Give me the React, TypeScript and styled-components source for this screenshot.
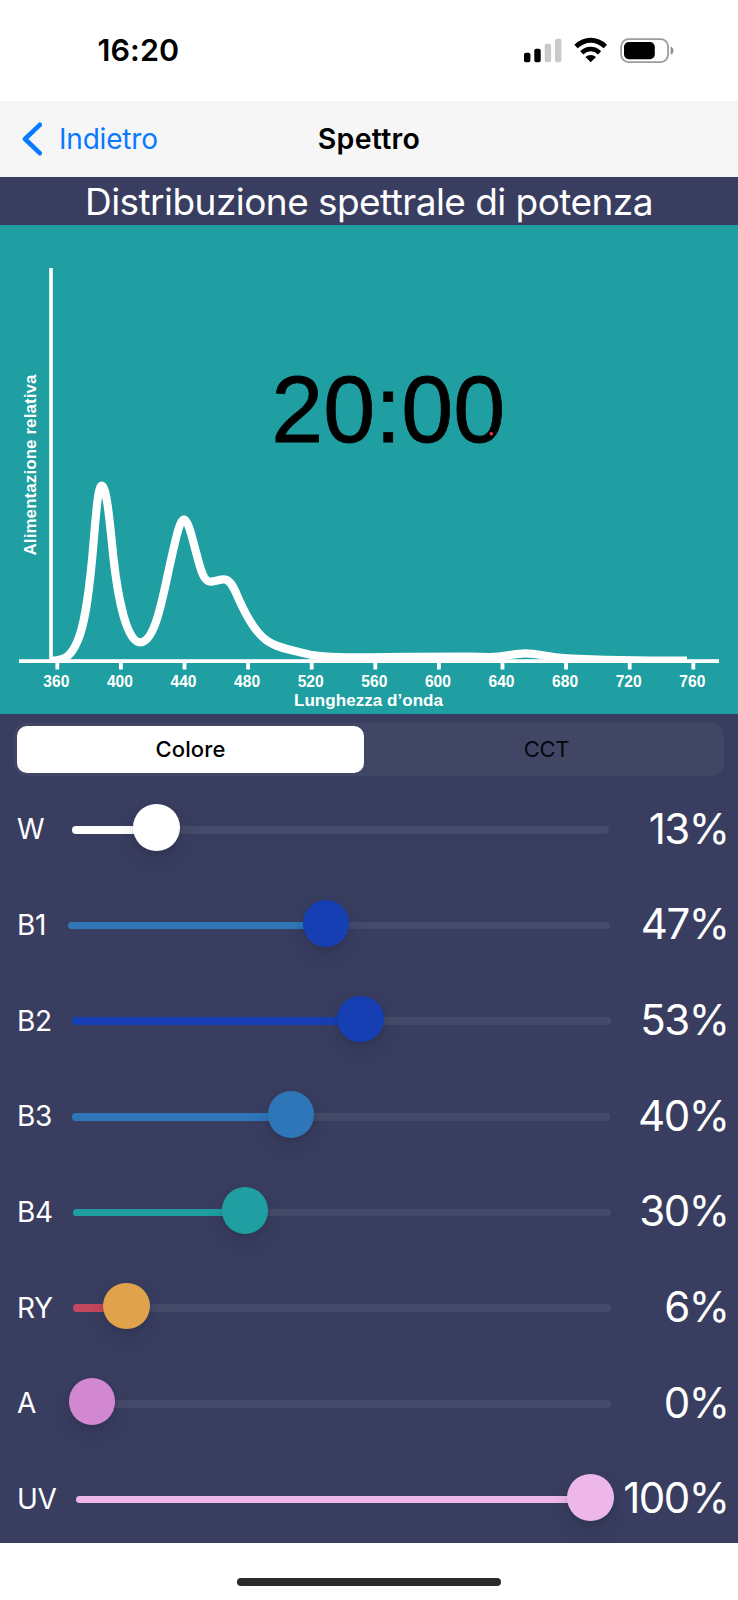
import React from "react";
import styled, { createGlobalStyle } from "styled-components";

const GlobalStyle = createGlobalStyle`
  * { box-sizing: border-box; }
  body { margin: 0; background: #fff; font-family: Inter, "Liberation Sans", sans-serif; }
`;

const Screen = styled.main`
  width: 738px;
  height: 1600px;
  display: flex;
  flex-direction: column;
  overflow: hidden;
  background: #fff;
`;

const StatusBar = styled.header`
  height: 101px;
  flex: none;
  display: flex;
  align-items: center;
  justify-content: space-between;
  padding: 0 64px 0 97.5px;
`;

const Clock = styled.time`
  font-size: 30.5px;
  font-weight: 600;
  line-height: 36px;
  padding-bottom: 2px;
  letter-spacing: 0.1px;
  color: #000;
`;

const StatusIcons = styled.svg`
  display: block;
  width: 152px;
  height: 28px;
`;

const NavBar = styled.nav`
  height: 76px;
  flex: none;
  display: grid;
  grid-template-columns: 1fr auto 1fr;
  align-items: center;
  padding: 0 21px;
  background: #f6f6f6;
`;

const BackButton = styled.button`
  display: flex;
  align-items: center;
  gap: 17px;
  padding: 0;
  border: 0;
  background: none;
  color: #0a7aff;
  font: 400 28px/34px Inter, sans-serif;
  letter-spacing: -0.2px;
`;

const NavTitle = styled.h1`
  margin: 0;
  font-size: 28.5px;
  font-weight: 600;
  line-height: 34px;
  letter-spacing: 0.3px;
  color: #000;
`;

const ChartTitle = styled.h2`
  height: 48px;
  flex: none;
  margin: 0;
  padding-top: 2px;
  background: #393e61;
  color: #fff;
  text-align: center;
  font-size: 37px;
  font-weight: 400;
  line-height: 45px;
  letter-spacing: -0.55px;
  white-space: nowrap;
`;

const Chart = styled.svg`
  display: block;
  flex: none;
  width: 738px;
  height: 489px;
  background: #1f9fa2;
  font-family: "Liberation Sans", Arial, sans-serif;
`;

const AxisText = styled.text<{ $size: number }>`
  font-size: ${(p) => p.$size}px;
  font-weight: 700;
  fill: #fff;
`;

const BigTime = styled.text`
  font-size: 94.5px;
  fill: #000;
  stroke: #000;
  stroke-width: 0.8px;
`;

const Panel = styled.section`
  height: 829px;
  flex: none;
  padding-top: 8.5px;
  background: #393e61;
`;

const Segmented = styled.div`
  height: 53.5px;
  margin: 0 14px;
  padding: 3.5px 3px;
  display: grid;
  grid-template-columns: 347px 1fr;
  border-radius: 13px;
  background: #414665;
`;

const Segment = styled.button<{ $active?: boolean }>`
  border: 0;
  padding: 0 0 0 ${(p) => (p.$active ? 0 : 8)}px;
  border-radius: 10px;
  background: ${(p) => (p.$active ? "#fff" : "transparent")};
  color: ${(p) => (p.$active ? "#000" : "#060710")};
  font: ${(p) => (p.$active ? 500 : 400)} 22px/28px Inter, sans-serif;
  letter-spacing: ${(p) => (p.$active ? 0.15 : -0.2)}px;
`;

const Row = styled.div`
  height: 95.67px;
  padding: 12px 10px 0 17px;
  display: flex;
  align-items: center;
`;

const Label = styled.span<{ $width: number }>`
  flex: none;
  width: ${(p) => p.$width}px;
  padding-bottom: 1px;
  color: #fff;
  font-size: 28px;
  font-weight: 400;
  line-height: 34px;
  letter-spacing: -0.4px;
`;

const Track = styled.div<{ $width: number }>`
  position: relative;
  flex: none;
  width: ${(p) => p.$width}px;
  height: 7.5px;
  border-radius: 4px;
  background: #454a6a;
`;

const Fill = styled.div<{ $color: string }>`
  height: 100%;
  border-radius: 4px;
  background: ${(p) => p.$color};
`;

const Knob = styled.div<{ $color: string }>`
  position: absolute;
  top: -21.6px;
  width: 46.7px;
  height: 46.7px;
  margin-left: -23.35px;
  border-radius: 50%;
  background: ${(p) => p.$color};
  box-shadow: 0 8px 18px rgba(0, 0, 0, 0.14), 0 1px 4px rgba(0, 0, 0, 0.08);
`;

const Value = styled.output`
  flex: 1;
  padding-bottom: 2px;
  margin-right: -0.5px;
  text-align: right;
  color: #fff;
  font-size: 42px;
  font-weight: 400;
  line-height: 50px;
  letter-spacing: -1.5px;
  white-space: nowrap;
`;

const HomeArea = styled.footer`
  flex: 1;
  display: flex;
  justify-content: center;
  padding-top: 34.7px;
`;

const HomeIndicator = styled.div`
  width: 264px;
  height: 8.3px;
  border-radius: 4.2px;
  background: #2a2a2a;
`;

interface Channel {
  name: string;
  value: number;
  start: number;
  end: number;
  knobAt: number;
  fill: string;
  knob: string;
}

const channels: Channel[] = [
  { name: "W", value: 13, start: 71.5, end: 609.3, knobAt: 156.5, fill: "#ffffff", knob: "#ffffff" },
  { name: "B1", value: 47, start: 67.5, end: 609.5, knobAt: 326, fill: "#3077b8", knob: "#153fb3" },
  { name: "B2", value: 53, start: 72, end: 611, knobAt: 360.7, fill: "#153fb3", knob: "#153fb3" },
  { name: "B3", value: 40, start: 72, end: 609.5, knobAt: 291, fill: "#2e76b8", knob: "#2e76b8" },
  { name: "B4", value: 30, start: 72.7, end: 611, knobAt: 245, fill: "#1f9fa2", knob: "#1f9fa2" },
  { name: "RY", value: 6, start: 72.7, end: 611, knobAt: 126.7, fill: "#c5465f", knob: "#e0a34c" },
  { name: "A", value: 0, start: 72.7, end: 611, knobAt: 92, fill: "#d287d1", knob: "#d287d1" },
  { name: "UV", value: 100, start: 76, end: 609, knobAt: 590.3, fill: "#edb7ea", knob: "#edb7ea" },
];

const wavelengths = [360, 400, 440, 480, 520, 560, 600, 640, 680, 720, 760];

/* Spectrum curve, drawn at three units per pixel. */
const spectrumPath = [
  "M150 602",
  "C195 602 212 590 232 545",
  "C254 495 265 415 276 300",
  "C286 195 292 77 305 77",
  "C319 77 328 170 340 290",
  "C353 410 380 547 420 547",
  "C468 547 490 400 514 295",
  "C529 229 540 178 552 178",
  "C564 178 577 235 589 280",
  "C603 332 611 365 632 365",
  "C645 365 658 358 672 358",
  "C695 358 706 396 722 430",
  "C745 480 766 516 798 540",
  "C832 566 888 572 930 584",
  "C965 592 1020 592 1110 592",
  "C1200 590 1300 590 1404 590",
  "L1470 591",
  "C1515 591 1540 580 1577 580",
  "C1615 580 1640 592 1700 595",
  "C1800 600 1900 602 2061 602",
].join(" ");

function Spectrum() {
  return (
    <Chart viewBox="0 0 738 489">
      <clipPath id="plot">
        <rect x="49" y="40" width="640" height="398" />
      </clipPath>
      <rect x="49.2" y="43" width="3.6" height="393" fill="#fff" />
      <rect x="19" y="434.2" width="700" height="3.8" fill="#fff" />
      <g clipPath="url(#plot)">
        <path
          d={spectrumPath}
          transform="translate(0 235) scale(0.33333)"
          fill="none"
          stroke="#fff"
          strokeWidth="24.5"
        />
      </g>
      {wavelengths.map((nm, i) => {
        const x = 57.3 + i * 63.6;
        return (
          <g key={nm}>
            <rect x={x - 1.9} y="437" width="3.8" height="7.5" fill="#fff" />
            <AxisText $size={15.9} x={x - 1} y="462" textAnchor="middle" textLength="26" lengthAdjust="spacingAndGlyphs">
              {nm}
            </AxisText>
          </g>
        );
      })}
      <AxisText $size={17} x="368.5" y="480.7" textAnchor="middle" textLength="149">Lunghezza d’onda</AxisText>
      <AxisText $size={17} transform="translate(35.7 240) rotate(-90)" textAnchor="middle" textLength="181">
        Alimentazione relativa
      </AxisText>
      <BigTime x="271.3" y="216.6" textLength="234" lengthAdjust="spacingAndGlyphs">20:00</BigTime>
      <circle cx="491.3" cy="208.7" r="1.8" fill="#ee3b46" />
    </Chart>
  );
}

export default function App() {
  return (
    <>
      <GlobalStyle />
      <Screen>
        <StatusBar>
          <Clock>16:20</Clock>
          <StatusIcons viewBox="522 36 152 28">
            <rect x="524" y="51.7" width="6.4" height="9.5" rx="1.8" />
            <rect x="534.3" y="47.8" width="6.4" height="13.4" rx="1.8" />
            <rect x="544.7" y="42.7" width="6.4" height="18.5" rx="1.8" fill="#cacaca" />
            <rect x="555" y="37.8" width="6.4" height="23.4" rx="1.8" fill="#cacaca" />
            <path d="M576 45.5 C585 37.2 596.4 37.2 605.4 45.5" fill="none" stroke="#000" strokeWidth="4.9" />
            <path d="M581.8 51.8 C587 46.7 594.4 46.7 599.6 51.8" fill="none" stroke="#000" strokeWidth="4.6" />
            <path d="M590.7 61.2 L585.4 56 C588.4 53.2 593 53.2 596 56 Z" />
            <rect x="621.1" y="38.1" width="47" height="23" rx="7.5" fill="none" stroke="#9c9c9c" strokeWidth="1.8" />
            <rect x="624" y="41" width="30.8" height="17.2" rx="4.8" />
            <path d="M670.7 45.6 C674.3 47 674.3 52.3 670.7 53.7 Z" fill="#8c8c8c" />
          </StatusIcons>
        </StatusBar>
        <NavBar>
          <BackButton>
            <svg width="21" height="34" viewBox="0 0 21 34">
              <path d="M18.8 2.8 L4 17 L18.8 31.2" fill="none" stroke="#0a7aff" strokeWidth="4.6" strokeLinecap="round" strokeLinejoin="round" />
            </svg>
            Indietro
          </BackButton>
          <NavTitle>Spettro</NavTitle>
        </NavBar>
        <ChartTitle>Distribuzione spettrale di potenza</ChartTitle>
        <Spectrum />
        <Panel>
          <Segmented>
            <Segment $active>Colore</Segment>
            <Segment>CCT</Segment>
          </Segmented>
          {channels.map((c) => (
            <Row key={c.name}>
              <Label $width={c.start - 17}>{c.name}</Label>
              <Track $width={c.end - c.start}>
                <Fill $color={c.fill} style={{ width: c.knobAt - c.start }} />
                <Knob $color={c.knob} style={{ left: c.knobAt - c.start }} />
              </Track>
              <Value>{c.value}%</Value>
            </Row>
          ))}
        </Panel>
        <HomeArea>
          <HomeIndicator />
        </HomeArea>
      </Screen>
    </>
  );
}
